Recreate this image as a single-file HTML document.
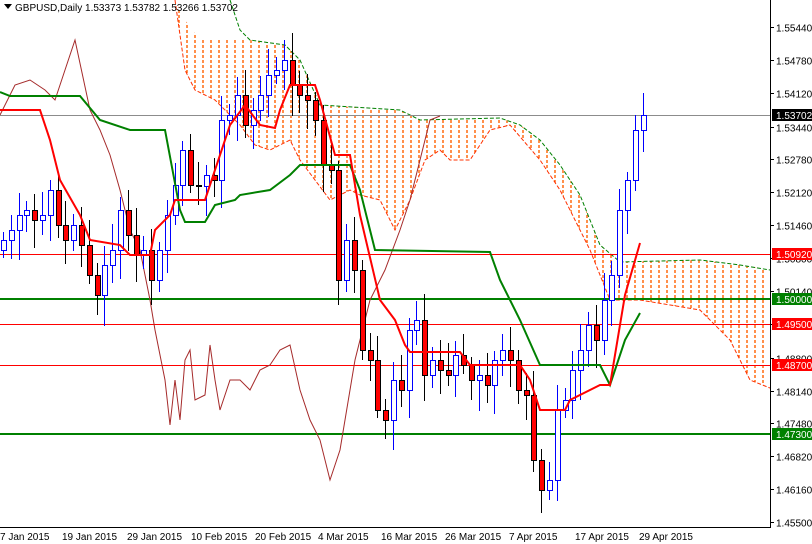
<!DOCTYPE html>
<html><head><meta charset="utf-8"><style>
html,body{margin:0;padding:0;background:#fff;overflow:hidden}
svg{display:block;font-family:"Liberation Sans",sans-serif}
</style></head><body>
<svg id="s" width="812" height="544" xmlns="http://www.w3.org/2000/svg">
<defs>
<clipPath id="cl"><rect x="0" y="0" width="770" height="527"/></clipPath>
<clipPath id="kc"><polygon points="175,0 185,20 200,40 215,40 230,38 250,40 285,45 300,60 320,105 400,110 420,120 500,118 520,125 540,140 560,165 580,195 600,245 620,262 700,260 740,265 770,270 770,388 750,380 730,340 700,310 640,300 610,300 590,250 575,220 560,190 540,160 510,125 490,130 470,160 450,160 440,150 425,160 410,200 395,230 380,200 360,195 350,190 330,200 300,160 290,140 270,150 255,145 240,125 215,100 195,90 185,70"/></clipPath>
</defs>
<rect width="812" height="544" fill="#fff"/>
<g clip-path="url(#cl)">
<g id="hatch" clip-path="url(#kc)"></g>
<polyline fill="none" stroke="#ff3000" stroke-width="1" stroke-dasharray="4,2" points="175,0 185,70 195,90 215,100 240,125 255,145 270,150 290,140 300,160 330,200 350,190 360,195 380,200 395,230 410,200 425,160 440,150 450,160 470,160 490,130 510,125 540,160 560,190 575,220 590,250 610,300 640,300 700,310 730,340 750,380 770,388"/>
<polyline fill="none" stroke="#008000" stroke-width="1" stroke-dasharray="4,2" points="230,0 240,30 250,40 285,45 300,60 320,105 400,110 420,120 500,118 520,125 540,140 560,165 580,195 600,245 620,262 700,260 740,265 770,270"/>
<line x1="0" y1="115.5" x2="770" y2="115.5" stroke="#8c8c8c" stroke-width="1"/>
<line x1="0" y1="254.5" x2="770" y2="254.5" stroke="#ff0000" stroke-width="1"/>
<line x1="0" y1="299" x2="770" y2="299" stroke="#008000" stroke-width="2"/>
<line x1="0" y1="324.5" x2="770" y2="324.5" stroke="#ff0000" stroke-width="1"/>
<line x1="0" y1="365.5" x2="770" y2="365.5" stroke="#ff0000" stroke-width="1"/>
<line x1="0" y1="434" x2="770" y2="434" stroke="#008000" stroke-width="2"/>
<polyline fill="none" stroke="#a52a2a" stroke-width="1" points="0,115 15,85 30,80 45,90 55,100 65,70 75,40 90,110 100,130 110,155 120,190 130,230 140,250 150,300 155,330 165,380 170,425 175,380 180,420 185,360 190,350 195,400 205,395 210,345 215,380 220,410 230,380 240,380 250,390 260,370 270,365 280,350 290,345 300,390 310,420 320,440 330,480 340,450 355,360 370,300 385,270 400,230 410,200 420,160 430,120 440,116"/>
<g id="cd"></g>
<polyline fill="none" stroke="#008000" stroke-width="2" points="0,92 10,96 80,96 100,120 130,130 165,130 180,210 185,222 205,222 215,205 235,200 240,195 270,190 290,175 300,165 350,165 360,190 375,250 490,252 500,280 520,320 540,365 600,365 610,385 625,340 640,313"/>
<polyline fill="none" stroke="#ff0000" stroke-width="2" points="0,110 40,110 50,140 60,180 80,215 90,240 120,245 130,255 150,255 155,230 170,215 175,200 205,200 230,125 245,105 260,125 275,128 280,110 290,85 315,85 320,100 335,155 350,155 360,215 380,300 395,320 405,345 410,352 460,352 470,365 520,365 530,380 540,410 565,410 570,400 600,385 610,385 625,295 640,243"/>
</g>
<line x1="770.5" y1="0" x2="770.5" y2="527" stroke="#000"/>
<line x1="0" y1="527.5" x2="771" y2="527.5" stroke="#000"/>
<g id="ax" font-size="10" fill="#000"></g>
<g font-size="10">
<rect x="772" y="109" width="40" height="12" fill="#000"/><text x="776" y="119" fill="#fff">1.53702</text>
<rect x="772" y="248" width="40" height="12" fill="#ff0000"/><text x="776" y="258" fill="#fff">1.50920</text>
<rect x="772" y="293" width="40" height="12" fill="#008000"/><text x="776" y="303" fill="#fff">1.50000</text>
<rect x="772" y="318" width="40" height="12" fill="#ff0000"/><text x="776" y="328" fill="#fff">1.49500</text>
<rect x="772" y="359" width="40" height="12" fill="#ff0000"/><text x="776" y="369" fill="#fff">1.48700</text>
<rect x="772" y="428" width="40" height="12" fill="#008000"/><text x="776" y="438" fill="#fff">1.47300</text>
</g>
<g font-size="10" fill="#000">
<text x="0" y="540">7 Jan 2015</text><text x="62" y="540">19 Jan 2015</text><text x="127" y="540">29 Jan 2015</text><text x="191" y="540">10 Feb 2015</text><text x="255" y="540">20 Feb 2015</text><text x="318" y="540">4 Mar 2015</text><text x="381" y="540">16 Mar 2015</text><text x="445" y="540">26 Mar 2015</text><text x="509" y="540">7 Apr 2015</text><text x="575" y="540">17 Apr 2015</text><text x="639" y="540">29 Apr 2015</text>
</g>
<polygon points="4,4 12,4 8,9" fill="#000"/>
<text x="15" y="11" font-size="10" fill="#000">GBPUSD,Daily  1.53373 1.53782 1.53266 1.53702</text>
</svg>
<script>
var hh='';for(var hx=171;hx<770;hx+=8){hh+='<line x1="'+hx+'" y1="0" x2="'+hx+'" y2="527" stroke="#ff6000" stroke-width="1.4" stroke-dasharray="3,2"/>';}
document.getElementById('hatch').innerHTML=hh;
var c=[240,230,215,210,220,215,190,225,240,225,245,275,295,265,250,210,235,255,250,280,250,215,185,150,185,185,175,180,120,115,95,125,110,95,75,70,60,85,95,100,120,165,170,280,240,270,350,360,410,420,380,390,330,320,375,360,370,375,355,365,380,375,385,360,350,360,390,395,460,490,480,410,400,370,350,325,340,300,275,210,180,130,115];
var g=document.getElementById('cd'),h='';
var prev=250;
for(var i=0;i<c.length;i++){
 var o=prev,cl=c[i];if(Math.abs(o-cl)<2)cl=o+1;
 var x=Math.round(3+i*7.8),t=Math.round(Math.min(o,cl)),b=Math.round(Math.max(o,cl));
 var hi=t-(8+(i*7)%20),lo=b+(8+(i*11)%24);
 var up=cl<o;var col=up?'#0000ff':'#000';
 h+='<line x1="'+(x+0.5)+'" y1="'+hi+'" x2="'+(x+0.5)+'" y2="'+lo+'" stroke="'+col+'"/>';
 h+='<rect x="'+(x-2+0.5)+'" y="'+(t+0.5)+'" width="5" height="'+(b-t)+'" fill="'+(up?'#fff':'#ff0000')+'" stroke="'+col+'"/>';
 prev=cl;
}
g.innerHTML=h;
var ax=document.getElementById('ax'),s='';
var v=[1.5544,1.5478,1.5412,1.5344,1.5278,1.5212,1.5146,1.508,1.5014,1.4948,1.488,1.4814,1.4748,1.4682,1.4616,1.455];
for(var k=0;k<v.length;k++){var y=Math.round(27+(1.5544-v[k])*4980)+0.5;s+='<line x1="770" y1="'+y+'" x2="774" y2="'+y+'" stroke="#000"/><text x="776" y="'+(y+4)+'">'+v[k].toFixed(5)+'</text>';}
ax.innerHTML=s;
</script>
</body></html>
